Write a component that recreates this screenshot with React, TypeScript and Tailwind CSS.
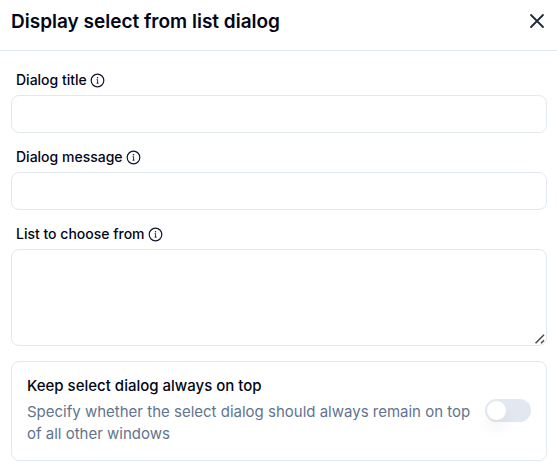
import React from "react";

function InfoIcon() {
  return (
    <svg width="15" height="15" viewBox="0 0 15 15" fill="none" stroke="#0f172a" strokeWidth="1.2" aria-hidden="true">
      <circle cx="7.5" cy="7.5" r="6.3" />
      <path d="M6.6 6.6h1v3.6M6.6 10.2h2" strokeWidth="0.9" />
      <circle cx="7.5" cy="4.8" r="0.75" fill="#0f172a" stroke="none" />
    </svg>
  );
}

const fieldClass = "block w-full rounded-lg border border-slate-200 bg-white px-3 text-sm outline-none";

function Field({ id, label, multiline = false }: { id: string; label: string; multiline?: boolean }) {
  return (
    <div>
      <label htmlFor={id} className="flex h-6 items-center gap-[3px] px-[5px] pb-[6px] text-sm leading-5 font-medium">
        {label}
        <InfoIcon />
      </label>
      {multiline ? (
        <div className="relative">
          <textarea id={id} className={fieldClass + " h-[97px] resize-y [&::-webkit-resizer]:bg-transparent"} />
          <svg
            className="pointer-events-none absolute right-[2px] bottom-[2px]"
            width="10"
            height="10"
            viewBox="0 0 10 10"
            stroke="#4b4b4b"
            strokeWidth="1.6"
            aria-hidden="true"
          >
            <path d="M0.5 9.3L9 0.8M6 9.3L9 6.3" />
          </svg>
        </div>
      ) : (
        <input id={id} type="text" className={fieldClass + " h-[38px]"} />
      )}
    </div>
  );
}

export default function App() {
  return (
    <main className="bg-white font-['Inter',sans-serif] text-slate-950">
      <header className="flex h-[51px] items-start justify-between border-b border-slate-200 px-[11px] pt-2">
        <h1 className="text-[19px] leading-7 font-semibold">Display select from list dialog</h1>
        <button type="button" aria-label="Close" className="flex h-[26px] items-center">
          <svg width="18" height="18" viewBox="0 0 18 18" fill="none" stroke="#1e293b" strokeWidth="1.8" strokeLinecap="round" aria-hidden="true">
            <path d="M3 3l12 12M15 3l-12 12" />
          </svg>
        </button>
      </header>
      <form className="flex flex-col gap-[15px] pt-5 pr-[10px] pl-[11px]">
        <Field id="title" label="Dialog title" />
        <Field id="message" label="Dialog message" />
        <Field id="list" label="List to choose from" multiline />
        <div className="flex items-center justify-between gap-3 rounded-lg border border-slate-200 px-[15px] pt-[13px] pb-[15px]">
          <div>
            <label htmlFor="top" className="block text-[15px] leading-[22px] font-medium">Keep select dialog always on top</label>
            <p id="top-hint" className="mt-1 text-[15px] leading-[22px] text-slate-500">
              Specify whether the select dialog should always remain on top of all other windows
            </p>
          </div>
          <input
            id="top"
            type="checkbox"
            role="switch"
            aria-describedby="top-hint"
            className="h-[23px] w-[46px] shrink-0 appearance-none rounded-full bg-slate-200 p-0.5 before:block before:size-[19px] before:rounded-full before:bg-white before:shadow-[0_10px_15px_rgba(0,0,0,0.05)] checked:bg-slate-900 checked:before:translate-x-[23px]"
          />
        </div>
      </form>
    </main>
  );
}
